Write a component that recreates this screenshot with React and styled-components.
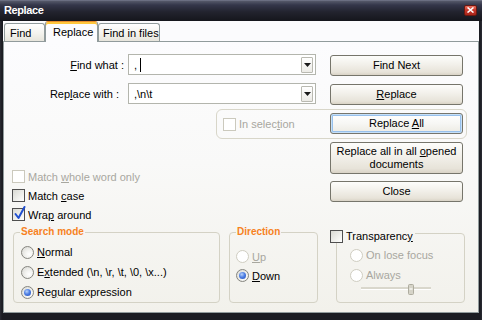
import React from 'react'
import styled, { createGlobalStyle } from 'styled-components'

const GlobalStyle = createGlobalStyle`
  html, body {
    margin: 0;
    padding: 0;
    background: #16171c;
  }
  body {
    font-family: "Liberation Sans", Arial, sans-serif;
    font-size: 11px;
    color: #000;
  }
  * { box-sizing: border-box; }
`

/* ~~~ window chrome ~~~ */
const Window = styled.div`
  width: 482px;
  height: 320px;
  display: flex;
  flex-direction: column;
  background: linear-gradient(90deg, #2a2b33 0, #1b1c22 2px, #1b1c22 calc(100% - 2px), #2a2b33 100%);
`

const TitleBar = styled.div`
  height: 21px;
  flex: none;
  display: flex;
  align-items: center;
  justify-content: space-between;
  padding: 0 5px 2px 4px;
  background: linear-gradient(180deg, #80849a 0, #555869 1px, #34364a 5px, #22232e 12px, #15161c 100%);
`

const Title = styled.span`
  color: #fff;
  font-weight: bold;
  font-size: 11px;
  letter-spacing: -0.4px;
`

const CloseBox = styled.div`
  width: 13px;
  height: 11px;
  margin-top: 1px;
  border: 1px solid #6b1810;
  border-radius: 2px;
  background: linear-gradient(180deg, #e8705f 0%, #c8372a 45%, #a9261b 100%);
  display: flex;
  align-items: center;
  justify-content: center;
`

const Client = styled.div`
  flex: 1;
  display: flex;
  flex-direction: column;
  margin: 0 3px 7px 3px;
  background: #fbfbfd;
`

/* ~~~ tabs ~~~ */
const TabStrip = styled.div`
  height: 20px;
  flex: none;
  display: flex;
  align-items: flex-end;
  padding-left: 1px;
`

const Tab = styled.div`
  position: relative;
  width: ${p => p.$w}px;
  height: ${p => (p.$active ? 21 : 18)}px;
  margin-bottom: ${p => (p.$active ? -1 : 0)}px;
  padding-left: ${p => p.$pl}px;
  display: flex;
  align-items: center;
  border: 1px solid #919b9c;
  border-bottom: none;
  border-top-color: ${p => (p.$active ? '#e68b2c' : '#919b9c')};
  border-radius: 3px 3px 0 0;
  background: ${p => (p.$active
    ? '#fcfcfe'
    : 'linear-gradient(180deg, #ffffff 0%, #f4f3ee 55%, #e7e5dc 100%)')};
  box-shadow: ${p => (p.$active ? 'inset 0 2px 0 #ffc73c' : 'none')};
  z-index: ${p => (p.$active ? 1 : 0)};
  white-space: nowrap;
`

const Panel = styled.div`
  flex: 1;
  border: 1px solid #919b9c;
  background: linear-gradient(180deg, #fcfcfe 0%, #f9f9f8 45%, #f2f1eb 100%);
  display: flex;
  flex-direction: column;
`

/* ~~~ top part: fields + buttons ~~~ */
const TopSection = styled.div`
  display: flex;
  align-items: flex-start;
  padding-top: 12px;
`

const LeftCol = styled.div`
  width: 326px;
  flex: none;
`

const FieldRow = styled.div`
  display: flex;
  align-items: center;
  height: 21px;
  margin-top: ${p => p.$mt || 0}px;
`

const FieldLabel = styled.span`
  width: 120px;
  padding-right: ${p => p.$pr || 0}px;
  text-align: right;
  margin-right: 4px;
  white-space: nowrap;
`

const Combo = styled.div`
  width: 188px;
  height: 21px;
  border: 1px solid #b3b5ad;
  background: #fff;
  display: flex;
  align-items: center;
  padding-left: 5px;
  white-space: pre;
`

const Caret = styled.span`
  display: inline-block;
  width: 1px;
  height: 14px;
  margin-left: 3px;
  background: #000;
`

const DropBtn = styled.div`
  margin-left: auto;
  margin-right: 2px;
  width: 12px;
  height: 16px;
  border: 1px solid #b9b9b1;
  border-radius: 1px;
  background: linear-gradient(180deg, #ffffff 0%, #ecebe6 100%);
  display: flex;
  align-items: center;
  justify-content: center;
`

const SelectionBox = styled.div`
  margin-top: 5px;
  margin-left: 212px;
  width: 251px;
  height: 30px;
  border: 1px solid #d8d6c9;
  border-radius: 6px;
  display: flex;
  align-items: center;
  padding-left: 6px;
`

const CheckRow = styled.label`
  display: flex;
  align-items: center;
  gap: 3px;
  height: 19px;
  padding-left: ${p => p.$pl || 0}px;
  margin-top: ${p => p.$mt || 0}px;
  color: ${p => (p.$disabled ? '#a8a79f' : '#000')};
  white-space: nowrap;
`

const Box = styled.span`
  position: relative;
  flex: none;
  width: 13px;
  height: 13px;
  border: 1px solid ${p => (p.$disabled ? '#cbc9bd' : '#4f4f4f')};
  background: ${p => (p.$disabled ? '#ffffff' : 'linear-gradient(135deg, #d9d9d3 0%, #f4f4f1 70%, #ffffff 100%)')};
`

const Tick = styled.svg`
  position: absolute;
  left: 0;
  top: -4px;
`

const ButtonCol = styled.div`
  width: 133px;
  flex: none;
  margin-top: 1px;
  display: flex;
  flex-direction: column;
  gap: 8px;
`

const Button = styled.div`
  height: ${p => p.$h || 21}px;
  margin-top: ${p => p.$mt || 0}px;
  border: 1px solid #76756b;
  border-radius: 3px;
  background: ${p => (p.$focus
    ? 'linear-gradient(180deg, #ffffff 0%, #f7f7f4 50%, #eceae2 100%)'
    : 'linear-gradient(180deg, #fdfdfb 0%, #f2f0ea 45%, #e7e3d9 85%, #d9d3c6 100%)')};
  box-shadow: ${p => (p.$focus ? 'inset 0 0 0 1px #c6e0f8, inset 0 0 0 2px #98c1ec' : 'none')};
  display: flex;
  align-items: center;
  justify-content: center;
  text-align: center;
  line-height: 13px;
`

/* ~~~ bottom part: group boxes ~~~ */
const BottomSection = styled.div`
  display: flex;
  align-items: flex-start;
  margin-top: 2px;
  padding-left: 9px;
`

const Group = styled.fieldset`
  margin: 0;
  margin-top: ${p => p.$mt || 0}px;
  margin-right: ${p => p.$mr || 0}px;
  padding: 0;
  min-width: 0;
  width: ${p => p.$w}px;
  height: ${p => p.$h}px;
  border: 1px solid #d4d2c5;
  border-radius: 4px;
`

const Legend = styled.legend`
  margin-left: 6px;
  padding: 0 1px;
  font-weight: bold;
  font-size: 10px;
  line-height: 12px;
  color: #f7821e;
`

const CheckLegend = styled.legend`
  margin-left: -7px;
  padding: 0 2px 0 0;
  height: 6px;
  display: flex;
  align-items: flex-start;
  gap: 3px;
  line-height: 13px;
  white-space: nowrap;
`

const GroupBody = styled.div`
  padding-top: ${p => p.$pt}px;
  padding-left: ${p => p.$pl}px;
`

const RadioRow = styled.label`
  display: flex;
  align-items: center;
  gap: 3px;
  height: ${p => p.$h}px;
  color: ${p => (p.$disabled ? '#a8a79f' : '#000')};
  white-space: nowrap;
`

const Dot = styled.span`
  position: relative;
  flex: none;
  width: 13px;
  height: 13px;
  border-radius: 50%;
  border: 1px solid ${p => (p.$disabled ? '#cfcdc1' : '#85857f')};
  background: ${p => (p.$disabled ? '#ffffff' : 'radial-gradient(circle at 65% 65%, #ffffff 0%, #f1f1ee 40%, #d4d4cf 100%)')};

  &::after {
    content: '';
    display: ${p => (p.$on ? 'block' : 'none')};
    position: absolute;
    left: 2px;
    top: 2px;
    width: 7px;
    height: 7px;
    border-radius: 50%;
    background: radial-gradient(circle at 40% 35%, #b9d3fa 0%, #4f80e4 45%, #1f4bb8 100%);
  }
`

const Slider = styled.svg`
  display: block;
  margin-top: -1px;
  margin-left: 11px;
`

const Check = ({ checked, disabled }) => (
  <Box $disabled={disabled}>
    {checked && (
      <Tick width="14" height="16" viewBox="0 0 14 16">
        <path d="M2.5 9 L5.5 13 L11.5 2" fill="none" stroke="#2150d0" strokeWidth="2" strokeLinecap="round" strokeLinejoin="round" />
      </Tick>
    )}
  </Box>
)

const Arrow = () => (
  <svg width="7" height="4" viewBox="0 0 7 4">
    <path d="M0 0 H7 L3.5 4 Z" fill="#1a1a1a" />
  </svg>
)

export default function App() {
  return (
    <>
      <GlobalStyle />
      <Window>
        <TitleBar>
          <Title>Replace</Title>
          <CloseBox>
            <svg width="7" height="6" viewBox="0 0 7 6">
              <path d="M0.5 0.5 L6.5 5.5 M6.5 0.5 L0.5 5.5" stroke="#fff" strokeWidth="1.6" />
            </svg>
          </CloseBox>
        </TitleBar>
        <Client>
          <TabStrip>
            <Tab $w={41} $pl={5}>Find</Tab>
            <Tab $w={53} $pl={7} $active>Replace</Tab>
            <Tab $w={62} $pl={4}>Find in files</Tab>
          </TabStrip>
          <Panel>
            <TopSection>
              <LeftCol>
                <FieldRow>
                  <FieldLabel><u>F</u>ind what :</FieldLabel>
                  <Combo>,<Caret /><DropBtn><Arrow /></DropBtn></Combo>
                </FieldRow>
                <FieldRow $mt={8}>
                  <FieldLabel $pr={5}>Rep<u>l</u>ace with :</FieldLabel>
                  <Combo>,\n\t<DropBtn><Arrow /></DropBtn></Combo>
                </FieldRow>
                <SelectionBox>
                  <CheckRow $disabled>
                    <Check disabled />
                    <span>In selec<u>t</u>ion</span>
                  </CheckRow>
                </SelectionBox>
                <CheckRow $pl={8} $mt={28} $disabled>
                  <Check disabled />
                  <span>Match <u>w</u>hole word only</span>
                </CheckRow>
                <CheckRow $pl={8}>
                  <Check />
                  <span>Match <u>c</u>ase</span>
                </CheckRow>
                <CheckRow $pl={8}>
                  <Check checked />
                  <span>Wra<u>p</u> around</span>
                </CheckRow>
              </LeftCol>
              <ButtonCol>
                <Button>Find Next</Button>
                <Button><span><u>R</u>eplace</span></Button>
                <Button $focus><span>Replace <u>A</u>ll</span></Button>
                <Button $h={32}><span>Replace all in all <u>o</u>pened<br />documents</span></Button>
                <Button $mt={-1}>Close</Button>
              </ButtonCol>
            </TopSection>
            <BottomSection>
              <Group $w={207} $h={77} $mr={9}>
                <Legend>Search mode</Legend>
                <GroupBody $pt={4} $pl={7}>
                  <RadioRow $h={20}><Dot /><span><u>N</u>ormal</span></RadioRow>
                  <RadioRow $h={20}><Dot /><span>E<u>x</u>tended (\n, \r, \t, \0, \x...)</span></RadioRow>
                  <RadioRow $h={20}><Dot $on /><span>Re<u>g</u>ular expression</span></RadioRow>
                </GroupBody>
              </Group>
              <Group $w={89} $h={77} $mr={18}>
                <Legend>Direction</Legend>
                <GroupBody $pt={9} $pl={6}>
                  <RadioRow $h={19} $disabled><Dot $disabled /><span><u>U</u>p</span></RadioRow>
                  <RadioRow $h={19}><Dot $on /><span><u>D</u>own</span></RadioRow>
                </GroupBody>
              </Group>
              <Group $w={129} $h={73} $mt={4}>
                <CheckLegend>
                  <Check />
                  <span>Transparenc<u>y</u></span>
                </CheckLegend>
                <GroupBody $pt={9} $pl={13}>
                  <RadioRow $h={20} $disabled><Dot $disabled /><span>On lose focus</span></RadioRow>
                  <RadioRow $h={20} $disabled><Dot $disabled /><span>Always</span></RadioRow>
                  <Slider width="72" height="11" viewBox="0 0 72 11">
                    <rect x="0" y="3" width="70" height="2" fill="#d9d7cc" />
                    <rect x="0" y="5" width="70" height="1" fill="#ffffff" />
                    <rect x="47.5" y="0.5" width="5" height="10" rx="1" fill="#d6d4c8" stroke="#aeac9f" />
                    <rect x="48.5" y="4" width="3" height="2" fill="#eeede6" />
                  </Slider>
                </GroupBody>
              </Group>
            </BottomSection>
          </Panel>
        </Client>
      </Window>
    </>
  )
}
